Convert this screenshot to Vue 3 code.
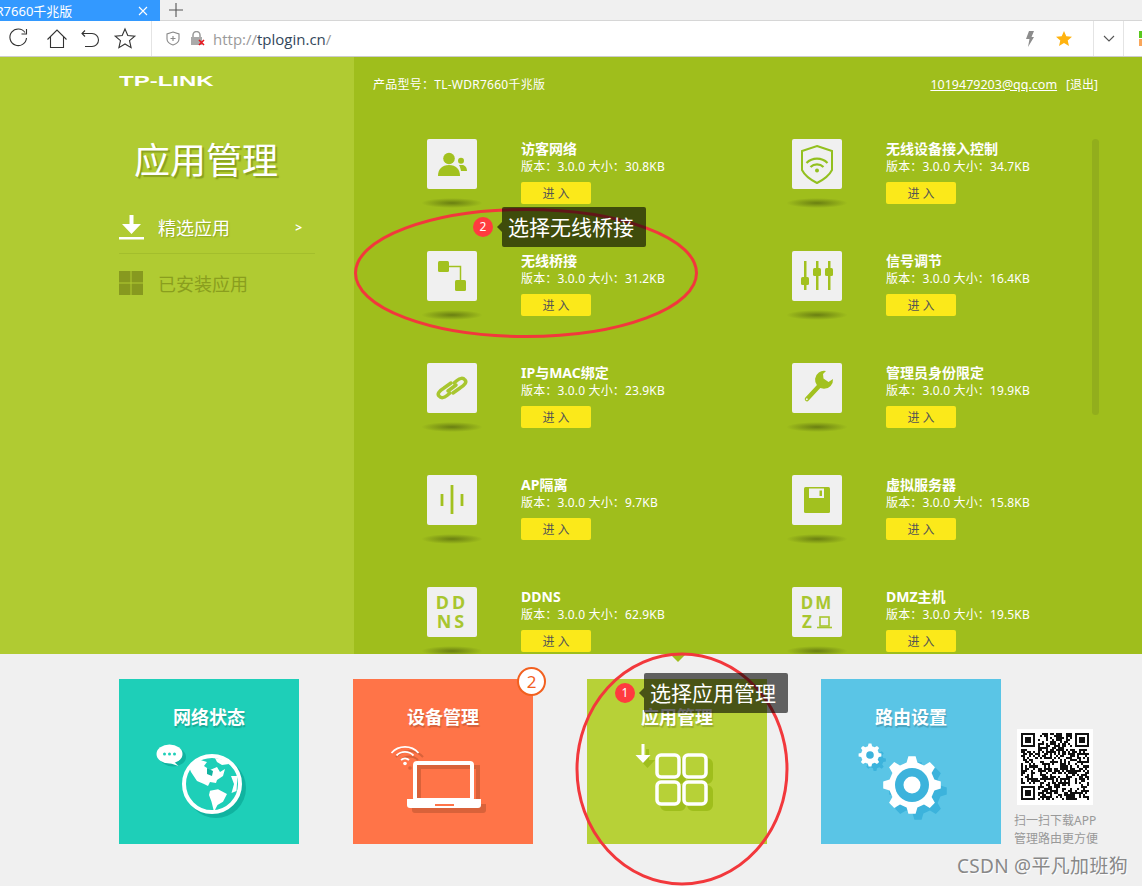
<template>
  <div class="page">
    <div class="tabbar">
      <div class="tab">
        <span class="tab-title">DR7660千兆版</span>
        <svg class="tab-close" width="12" height="12" viewBox="0 0 12 12"><path d="M2 2l8 8M10 2l-8 8" stroke="#fff" stroke-width="1.1" /></svg>
      </div>
      <svg class="tab-add" width="14" height="14" viewBox="0 0 14 14"><path d="M7 0v14M0 7h14" stroke="#555" stroke-width="1.1" /></svg>
    </div>

    <div class="toolbar">
      <svg class="nav-icons" width="151" height="35" viewBox="0 0 151 35" fill="none" stroke="#333" stroke-width="1.1">
        <path d="M25 11.500A8.300 8.300 0 1 0 26.500 17" />
        <path d="M26.500 8v5h-5" />
        <path d="M47.500 18.500L57 9l9.500 9.500M50.500 16v10.500h13V16" />
        <path d="M85 9.500l-3 3 3 3M82 12.500h10a6 6 0 0 1 0 13h-7" />
        <path d="M125 8l2.800 6.500 7 .6-5.300 4.600 1.600 6.900-6.100-3.600-6.100 3.600 1.600-6.900-5.300-4.600 7-.6z" />
      </svg>
      <div class="address">
        <svg width="14" height="15" viewBox="0 0 14 15" fill="none" stroke="#888" stroke-width="1.100">
          <path d="M7 1l6 2v5c0 3-3 5-6 6-3-1-6-3-6-6V3z" />
          <path d="M7 5v5M4.500 7.500h5" />
        </svg>
        <svg class="lock" width="15" height="15" viewBox="0 0 15 15">
          <path d="M3 6V4a3.500 3.500 0 0 1 7 0v2" fill="none" stroke="#999" stroke-width="1.500" />
          <rect x="1" y="6" width="11" height="8" fill="#aaa" />
          <path d="M9 9l5 5M14 9l-5 5" stroke="#e8141c" stroke-width="1.600" />
        </svg>
        <span class="url"><span class="url-dim">http://</span>tplogin.cn<span class="url-dim">/</span></span>
      </div>
      <svg class="bolt" width="10" height="16" viewBox="0 0 10 16"><path d="M4 0h5L6.500 6H9L3 16l1.500-8H1z" fill="#8c8c8c" /></svg>
      <svg class="fav" width="16" height="15" viewBox="0 0 16 15"><path d="M8 0l2.300 5.200 5.700.5-4.300 3.700L13 15 8 12l-5 3 1.300-5.600L0 5.700l5.700-.5z" fill="#ffb30f" /></svg>
      <div class="drop">
        <svg width="12" height="7" viewBox="0 0 12 7"><path d="M1 1l5 5 5-5" fill="none" stroke="#555" stroke-width="1.100" /></svg>
      </div>
      <div class="corner"><i class="sq-green"></i><i class="sq-orange"></i></div>
    </div>

    <div class="app">
      <aside class="side">
        <div class="logo">TP-LINK</div>
        <h1 class="side-title">应用管理</h1>
        <div class="menu-row active">
          <svg width="25" height="25" viewBox="0 0 25 25">
            <path d="M10.500 0h4v9h7.500l-9.500 10L3 9h7.500z" fill="#fff" />
            <rect y="22" width="25" height="2.500" fill="#fff" />
          </svg>
          <span class="menu-label">精选应用</span>
          <span class="menu-arrow">&gt;</span>
        </div>
        <div class="menu-row muted">
          <svg width="24" height="24" viewBox="0 0 24 24" fill="#87991f">
            <rect width="11.500" height="11.500" />
            <rect x="12.500" width="11.500" height="11.500" />
            <rect y="12.500" width="11.500" height="11.500" />
            <rect x="12.500" y="12.500" width="11.500" height="11.500" />
          </svg>
          <span class="menu-label">已安装应用</span>
        </div>
      </aside>

      <main class="main">
        <div class="main-head">
          <span class="model">产品型号：TL-WDR7660千兆版</span>
          <span class="account"><a class="email">1019479203@qq.com</a><span>[退出]</span></span>
        </div>
        <div class="apps">
          <div v-for="app in apps" :key="app.name" class="app-item">
            <div class="app-icon-col">
              <div class="app-icon">
                <svg v-if="app.icon === 'guest'" width="50" height="50" viewBox="0 0 50 50" fill="#a2c11f">
                  <circle cx="22" cy="19.500" r="5.800" />
                  <path d="M11 37c0-7 4-11 11-11s11 4 11 11z" />
                  <circle cx="34" cy="21.700" r="3" />
                  <path d="M32 26h3c3 0 5 2.500 5 6h-6c-.5-2.500-1-4.200-2-6z" />
                </svg>
                <svg v-else-if="app.icon === 'shield'" width="50" height="50" viewBox="0 0 50 50" fill="none" stroke="#93c01f" stroke-width="2">
                  <path d="M25 7l15 5v19c-3 6-9 10-15 13-6-3-12-7-15-13V12z" />
                  <path d="M14.500 24a15 15 0 0 1 21 0M18.500 28a9.500 9.500 0 0 1 13 0" stroke-width="2.200" />
                  <circle cx="25" cy="31.500" r="2" fill="#93c01f" stroke="none" />
                </svg>
                <svg v-else-if="app.icon === 'bridge'" width="50" height="50" viewBox="0 0 50 50" fill="#a2c11f">
                  <path d="M22 15.500h11.500V29" fill="none" stroke="#a2c11f" stroke-width="1.500" />
                  <rect x="11" y="10" width="11" height="11" rx="1.500" />
                  <rect x="28" y="29" width="11" height="11" rx="1.500" />
                </svg>
                <svg v-else-if="app.icon === 'sliders'" width="50" height="50" viewBox="0 0 50 50" fill="#a2c11f">
                  <rect x="12" y="10" width="2.500" height="29" />
                  <rect x="24" y="10" width="2.500" height="29" />
                  <rect x="36" y="10" width="2.500" height="29" />
                  <rect x="9" y="26" width="8" height="8" rx="1.500" />
                  <rect x="21" y="17" width="8" height="8" rx="1.500" />
                  <rect x="33" y="17" width="8" height="8" rx="1.500" />
                </svg>
                <svg v-else-if="app.icon === 'link'" width="50" height="50" viewBox="0 0 50 50" fill="none" stroke="#a8c62f" stroke-width="3.500" stroke-linecap="round">
                  <path d="M24 20l-7 5c-5 3-7 6-5 8 2 2.500 5 2 8-.5l3-2.500" />
                  <path d="M21 25c-2-2-.5-4 2-6l7-4c3-2 5-1.500 7 .5" opacity="0" />
                  <path d="M26 30l7-5c5-3 7-6 5-8-2-2.500-5-2-8 .5l-3 2.500" />
                  <path d="M21 28l8-6" stroke-width="3.500" />
                </svg>
                <svg v-else-if="app.icon === 'wrench'" width="50" height="50" viewBox="0 0 50 50" fill="none" stroke="#a2c11f">
                  <path d="M15 36l13-14" stroke-width="4.500" stroke-linecap="round" />
                  <circle cx="14.800" cy="36.200" r="1" fill="#f0f0f0" stroke="none" />
                  <path d="M34 8A9 9 0 1 0 41 16L36.500 19 31.500 15.500 31 11Z" fill="#a2c11f" stroke="none" />
                </svg>
                <svg v-else-if="app.icon === 'ap'" width="50" height="50" viewBox="0 0 50 50" stroke="#a2c11f" stroke-width="2.800">
                  <path d="M15 19v12M25 10v29M35 19v12" />
                </svg>
                <svg v-else-if="app.icon === 'floppy'" width="50" height="50" viewBox="0 0 50 50">
                  <rect x="12" y="12" width="26" height="26" rx="1.500" fill="#a2c11f" />
                  <rect x="17" y="13.500" width="15" height="9.500" fill="#f0f0f0" />
                  <rect x="27.500" y="15.500" width="2.500" height="5.500" fill="#a2c11f" />
                </svg>
                <div v-else-if="app.icon === 'ddns'" class="icon-text">DD<br />NS</div>
                <div v-else class="icon-text dmz">
                  DM<br />Z<svg class="dmz-mark" width="15" height="13" viewBox="0 0 15 13" fill="none" stroke="#a8c62f" stroke-width="1.600">
                    <rect x="3" y="1" width="9" height="9" />
                    <path d="M0 11.500h15" />
                  </svg>
                </div>
              </div>
              <div class="app-shadow"></div>
            </div>
            <div class="app-info">
              <div class="app-name">{{ app.name }}</div>
              <div class="app-meta">版本：3.0.0 大小：{{ app.size }}</div>
              <button type="button" class="enter">进 入</button>
            </div>
          </div>
        </div>
        <div class="scrollbar"></div>
      </main>
    </div>

    <div class="bottom">
      <div class="caret"></div>
      <div class="tile teal">
        <div class="tile-title">网络状态</div>
        <svg width="180" height="115" viewBox="0 0 180 115">
          <defs>
            <clipPath id="globe-clip"><circle cx="93" cy="55" r="28" /></clipPath>
          </defs>
          <circle cx="97" cy="59" r="30" fill="#10b3a0" />
          <ellipse cx="54" cy="28" rx="13" ry="9.500" fill="#10b3a0" />
          <circle cx="93" cy="55" r="28" fill="#1ecfb8" />
          <g clip-path="url(#globe-clip)" fill="#fff">
            <path d="M68 33l10-3 10 3-3 4 6 4 7-3 3 5 5-3-2 7-6 4-1 3-6-1-2 4-4-2-7-3-6-9z" />
            <path d="M91 61.700l8-1.400 9 4.700-4 7.700-5.500 3.300-3.500 6.700-2.500-10-2.500-6.700z" />
            <path d="M96 29l10 2 4 4-7 1-5-3z" />
            <path d="M112 47l3 8-2.500 9 5-2 1-15z" />
          </g>
          <path d="M88 39l6 3-1 5-5-2z" fill="#10b3a0" />
          <circle cx="93" cy="55" r="28" fill="none" stroke="#fff" stroke-width="4" />
          <ellipse cx="50.500" cy="25" rx="13" ry="9.500" fill="#fff" />
          <path d="M53 31l6.500 6-12-4z" fill="#fff" />
          <g fill="#1ecfb8">
            <circle cx="45.500" cy="25" r="1.500" />
            <circle cx="50.500" cy="25" r="1.500" />
            <circle cx="55.500" cy="25" r="1.500" />
          </g>
        </svg>
      </div>

      <div class="tile orange">
        <div class="tile-title">设备管理</div>
        <div class="count">2</div>
        <svg width="180" height="115" viewBox="0 0 180 115" fill="none">
          <g stroke="#d9623a">
            <path d="M66 38h59v37H66z" stroke-width="4" />
            <path d="M59 75h74v6a3 3 0 0 1-3 3H62a3 3 0 0 1-3-3z" fill="#d9623a" stroke="none" />
            <path d="M43 28a18 18 0 0 1 27 0M48 31a12 12 0 0 1 17 0" stroke-width="2" />
            <circle cx="57" cy="39" r="1.800" fill="#d9623a" stroke="none" />
          </g>
          <g stroke="#fff">
            <rect x="62" y="34" width="57" height="37" rx="2" stroke-width="4" />
            <path d="M54 70h74v6a3 3 0 0 1-3 3H57a3 3 0 0 1-3-3z" fill="#fff" stroke="none" />
            <path d="M38.500 24A18 18 0 0 1 65.500 24M43.500 26.500A12 12 0 0 1 60.500 26.500M48 31A6 6 0 0 1 56 31" stroke-width="1.800" />
          </g>
          <rect x="82" y="75" width="19" height="2" fill="#ff7448" />
          <circle cx="52" cy="34.500" r="1.800" fill="#fff" />
        </svg>
      </div>

      <div class="tile lime">
        <div class="tile-title">应用管理</div>
        <svg width="180" height="115" viewBox="0 0 180 115" fill="none">
          <g stroke="#9fbe1c" stroke-width="4" fill="#9fbe1c">
            <rect x="75" y="31" width="22" height="22" rx="4" />
            <rect x="102" y="31" width="22" height="22" rx="4" />
            <rect x="75" y="58" width="22" height="22" rx="4" />
            <rect x="102" y="58" width="22" height="22" rx="4" />
          </g>
          <path d="M59 20h3v11h6l-7.500 8-7.500-8h6z" fill="#9fbe1c" />
          <g stroke="#fff" stroke-width="3.500" fill="#b7d137">
            <rect x="70" y="26" width="22" height="22" rx="4" />
            <rect x="97" y="26" width="22" height="22" rx="4" />
            <rect x="70" y="53" width="22" height="22" rx="4" />
            <rect x="97" y="53" width="22" height="22" rx="4" />
          </g>
          <path d="M54.500 15h3v11h6l-7.500 8-7.500-8h6z" fill="#fff" />
        </svg>
      </div>

      <div class="tile blue">
        <div class="tile-title">路由设置</div>
        <svg width="180" height="115" viewBox="0 0 180 115">
          <path :d="gear(97, 62, 29, 23, 8)" fill="#3cb3dc" />
          <path :d="gear(54, 31, 11, 8.500, 8)" fill="#3cb3dc" />
          <path :d="gear(91, 56, 29, 23, 8)" fill="#fff" />
          <circle cx="91" cy="56" r="17" fill="#3cb3dc" />
          <path d="M91 39a17 17 0 0 1 12 29 17 17 0 0 1-12 5 14 14 0 0 0 0-34z" fill="#5ac5e6" opacity=".5" />
          <circle cx="91" cy="56" r="8.500" fill="#fff" />
          <path :d="gear(49, 26, 11.500, 9, 8)" fill="#fff" />
          <circle cx="49" cy="26" r="3.800" fill="#3cb3dc" />
        </svg>
      </div>

      <div class="qr-col">
        <svg class="qr" width="76" height="77" viewBox="-2 -2 37 37" shape-rendering="crispEdges">
          <rect x="-2" y="-2" width="37" height="37" fill="#fff" />
          <rect v-for="cell in qrCells" :key="cell.x + '-' + cell.y" :x="cell.x" :y="cell.y" width="1" height="1" fill="#111" />
        </svg>
        <p>扫一扫下载APP<br />管理路由更方便</p>
      </div>
    </div>

    <svg class="rings" width="1142" height="886" viewBox="0 0 1142 886" fill="none" stroke="#f2383c" stroke-width="3">
      <ellipse cx="526" cy="273" rx="170.500" ry="63.500" />
      <ellipse cx="682" cy="769" rx="105" ry="115" />
    </svg>

    <div class="hint hint-bridge">
      <span class="hint-dot">2</span>
      <span class="hint-box">选择无线桥接</span>
    </div>
    <div class="hint hint-app">
      <span class="hint-dot">1</span>
      <span class="hint-box">选择应用管理</span>
    </div>
    <div class="watermark">CSDN @平凡加班狗</div>
  </div>
</template>

<script setup>
const apps = [
  { name: '访客网络', size: '30.8KB', icon: 'guest' },
  { name: '无线设备接入控制', size: '34.7KB', icon: 'shield' },
  { name: '无线桥接', size: '31.2KB', icon: 'bridge' },
  { name: '信号调节', size: '16.4KB', icon: 'sliders' },
  { name: 'IP与MAC绑定', size: '23.9KB', icon: 'link' },
  { name: '管理员身份限定', size: '19.9KB', icon: 'wrench' },
  { name: 'AP隔离', size: '9.7KB', icon: 'ap' },
  { name: '虚拟服务器', size: '15.8KB', icon: 'floppy' },
  { name: 'DDNS', size: '62.9KB', icon: 'ddns' },
  { name: 'DMZ主机', size: '19.5KB', icon: 'dmz' }
]

function gear(cx, cy, outer, inner, teeth) {
  const step = (Math.PI * 2) / teeth
  const points = []
  for (let i = 0; i < teeth; i++) {
    const a = i * step - Math.PI / 2
    const corners = [
      [inner, a - step * 0.3],
      [outer, a - step * 0.16],
      [outer, a + step * 0.16],
      [inner, a + step * 0.3]
    ]
    for (const [r, t] of corners) {
      points.push((cx + r * Math.cos(t)).toFixed(1) + ' ' + (cy + r * Math.sin(t)).toFixed(1))
    }
  }
  return 'M' + points.join('L') + 'Z'
}

// the code in the shot is unreadable, so the modules are only pseudo random
function buildQr() {
  const size = 33
  const far = size - 7
  const cells = []
  let seed = 7411
  const inFinder = (x, y, ox, oy) => x >= ox - 1 && x <= ox + 7 && y >= oy - 1 && y <= oy + 7
  const finderOn = (x, y, ox, oy) => {
    const dx = x - ox
    const dy = y - oy
    if (dx < 0 || dx > 6 || dy < 0 || dy > 6) return false
    const edge = dx === 0 || dx === 6 || dy === 0 || dy === 6
    const core = dx >= 2 && dx <= 4 && dy >= 2 && dy <= 4
    return edge || core
  }
  for (let y = 0; y < size; y++) {
    for (let x = 0; x < size; x++) {
      seed = (seed * 1103515245 + 12345) & 0x7fffffff
      const corners = [[0, 0], [far, 0], [0, far]]
      const finder = corners.find(([ox, oy]) => inFinder(x, y, ox, oy))
      const on = finder ? finderOn(x, y, finder[0], finder[1]) : (seed >> 16) % 100 < 54
      if (on) cells.push({ x, y })
    }
  }
  return cells
}

const qrCells = buildQr()
</script>

<style>
html,
body {
  margin: 0;
  background: #f0f0f0;
}
</style>

<style scoped>
.page {
  position: relative;
  width: 1142px;
  height: 886px;
  overflow: hidden;
  display: flex;
  flex-direction: column;
  background: #f0f0f0;
  font-family: "Noto Sans", "Noto Sans CJK SC", sans-serif;
}

.tabbar {
  flex: none;
  height: 20px;
  display: flex;
  align-items: center;
  border-bottom: 1px solid #d6d6d6;
  background: #f0f0f0;
}

.tab {
  width: 160px;
  height: 21px;
  margin-bottom: -1px;
  display: flex;
  align-items: center;
  justify-content: space-between;
  overflow: hidden;
  background: #3399ff;
  color: #fff;
  font-size: 13px;
}

.tab-title {
  margin-left: -14px;
  white-space: nowrap;
}

.tab-close {
  margin-right: 11px;
}

.tab-add {
  margin-left: 9px;
}

.toolbar {
  flex: none;
  height: 35px;
  display: flex;
  align-items: center;
  background: #fff;
  border-bottom: 1px solid #ccc;
}

.nav-icons {
  flex: none;
  border-right: 1px solid #e4e4e4;
}

.address {
  flex: 1;
  display: flex;
  align-items: center;
  padding-left: 14px;
}

.lock {
  margin-left: 10px;
}

.url {
  margin-left: 8px;
  font-family: "Open Sans", sans-serif;
  font-size: 15px;
  color: #33475b;
}

.url-dim {
  color: #9a9a9a;
}

.bolt {
  margin-right: 21px;
}

.fav {
  margin-right: 21px;
}

.drop {
  width: 29px;
  height: 35px;
  display: flex;
  align-items: center;
  justify-content: center;
  border-left: 1px solid #e4e4e4;
  border-right: 1px solid #e4e4e4;
}

.corner {
  width: 18px;
  height: 35px;
  display: flex;
  flex-direction: column;
  align-items: flex-end;
  justify-content: center;
  gap: 1px;
}

.corner i {
  display: block;
  width: 3px;
  height: 7px;
}

.sq-green {
  background: #5ac81e;
}

.sq-orange {
  background: #f9a65a;
}

.app {
  flex: none;
  height: 597px;
  display: flex;
  overflow: hidden;
}

.side {
  flex: none;
  width: 235px;
  padding: 17px 0 0 119px;
  background: #b0cb32;
  color: #fff;
}

.logo {
  width: 59px;
  height: 14px;
  font-family: "Liberation Sans", sans-serif;
  font-size: 15px;
  font-weight: 700;
  line-height: 14px;
  white-space: nowrap;
  transform: scaleX(1.6);
  transform-origin: left center;
}

.side-title {
  margin: 49px 0 0 15px;
  font-size: 36px;
  font-weight: 400;
  line-height: 48px;
  text-shadow: 2px 2px 1px rgba(90, 110, 10, 0.45);
}

.menu-row {
  width: 196px;
  display: flex;
  align-items: center;
  font-size: 18px;
}

.menu-row.active {
  height: 48px;
  margin-top: 18px;
  padding-bottom: 2px;
  border-bottom: 1px solid #a3be2c;
}

.menu-row.muted {
  height: 58px;
  padding-bottom: 2px;
  color: #8a9e1e;
}

.menu-label {
  margin-left: 14px;
  text-shadow: 1px 1px 1px rgba(90, 110, 10, 0.35);
}

.menu-row.muted .menu-label {
  margin-left: 15px;
  text-shadow: none;
}

.menu-arrow {
  margin-left: auto;
  margin-right: 13px;
  font-size: 12px;
  font-weight: 700;
}

.main {
  position: relative;
  flex: 1;
  overflow: hidden;
  background: #9fbe1c;
  color: #fff;
}

.main-head {
  height: 54px;
  padding: 0 44px 0 19px;
  display: flex;
  align-items: center;
  justify-content: space-between;
  font-size: 12px;
}

.model {
  letter-spacing: 0.25px;
}

.account {
  display: flex;
  align-items: center;
  gap: 9px;
}

.email {
  font-size: 12.5px;
  text-decoration: underline;
}

.apps {
  padding: 28px 0 0 73px;
  display: grid;
  grid-template-columns: 365px 300px;
  grid-auto-rows: 112px;
}

.app-item {
  display: flex;
  align-items: flex-start;
}

.app-icon-col {
  width: 50px;
  flex: none;
}

.app-icon {
  width: 50px;
  height: 50px;
  border-radius: 2px;
  background: #f0f0f0;
}

.app-icon > svg {
  display: block;
}

.icon-text {
  height: 50px;
  display: flex;
  flex-direction: column;
  justify-content: center;
  box-sizing: border-box;
  display: block;
  padding-top: 6px;
  color: #a8c62f;
  font-size: 18px;
  font-weight: 700;
  letter-spacing: 3px;
  line-height: 19px;
  text-align: center;
}

.icon-text.dmz {
  font-size: 17px;
  letter-spacing: 2px;
}

.dmz-mark {
  margin-left: 3px;
  vertical-align: -1px;
}

.app-shadow {
  width: 62px;
  height: 10px;
  margin: 9px 0 0 -6px;
  background: radial-gradient(ellipse at center, rgba(70, 85, 10, 0.6), rgba(70, 85, 10, 0) 70%);
}

.app-info {
  margin-left: 44px;
  min-width: 0;
}

.app-name {
  height: 18px;
  margin-top: 1px;
  font-size: 14px;
  font-weight: 700;
  line-height: 18px;
}

.app-meta {
  height: 18px;
  font-size: 12px;
  letter-spacing: 0.15px;
  line-height: 18px;
}

.enter {
  display: block;
  width: 70px;
  height: 22px;
  margin-top: 6px;
  padding: 0;
  border: 0;
  border-radius: 2px;
  background: #fbe91a;
  color: #555;
  font-family: inherit;
  font-size: 12px;
}

.scrollbar {
  position: absolute;
  left: 738px;
  top: 82px;
  width: 7px;
  height: 276px;
  border-radius: 4px;
  background: #92ae1c;
}

.bottom {
  position: relative;
  flex: 1;
  padding: 25px 0 0 119px;
  display: flex;
  align-items: flex-start;
  gap: 54px;
}

.caret {
  position: absolute;
  left: 670px;
  top: 0;
  width: 0;
  height: 0;
  border-style: solid;
  border-width: 8px 8px 0;
  border-color: #9fbe1c transparent transparent;
}

.tile {
  position: relative;
  width: 180px;
  height: 165px;
  flex: none;
  padding-top: 27px;
  box-sizing: border-box;
  color: #fff;
}

.tile svg {
  display: block;
  margin-top: 1px;
}

.tile-title {
  height: 22px;
  text-align: center;
  font-size: 18px;
  font-weight: 700;
  line-height: 22px;
  text-shadow: 1px 2px 1px rgba(0, 0, 0, 0.18);
}

.teal {
  background: #1ecfb8;
}

.orange {
  background: #ff7448;
}

.lime {
  background: #b7d137;
}

.blue {
  background: #5ac5e6;
}

.count {
  position: absolute;
  right: -13px;
  top: -12px;
  width: 25px;
  height: 25px;
  border: 2px solid #f2601f;
  border-radius: 50%;
  background: #fff;
  color: #f2601f;
  font-size: 17px;
  line-height: 25px;
  text-align: center;
}

.qr-col {
  margin: 49px 0 0 -41px;
  color: #999;
  font-size: 12px;
  line-height: 18px;
}

.qr {
  display: block;
  margin-left: 3px;
}

.qr-col p {
  margin: 7px 0 0;
  white-space: nowrap;
}

.rings {
  position: absolute;
  left: 0;
  top: 0;
  pointer-events: none;
}

.hint {
  position: absolute;
  display: flex;
  align-items: center;
}

.hint-bridge {
  left: 473px;
  top: 207px;
}

.hint-app {
  left: 615px;
  top: 673px;
}

.hint-dot {
  width: 20px;
  height: 20px;
  border-radius: 50%;
  background: #ff3b3f;
  color: #fff;
  font-size: 12px;
  line-height: 20px;
  text-align: center;
}

.hint-box {
  position: relative;
  width: 144px;
  height: 40px;
  margin-left: 9px;
  padding-left: 6px;
  box-sizing: border-box;
  border-radius: 2px;
  background: rgba(0, 0, 0, 0.6);
  color: #fff;
  font-size: 21px;
  line-height: 40px;
  white-space: nowrap;
}

.hint-box::before {
  content: "";
  position: absolute;
  left: -5px;
  top: 15px;
  border-style: solid;
  border-width: 5px 5px 5px 0;
  border-color: transparent rgba(0, 0, 0, 0.6) transparent transparent;
}

.watermark {
  position: absolute;
  right: 14px;
  top: 854px;
  color: #888;
  font-size: 19px;
  line-height: 24px;
  letter-spacing: 0.3px;
  text-shadow: 1px 1px 1px #fff;
}
</style>
